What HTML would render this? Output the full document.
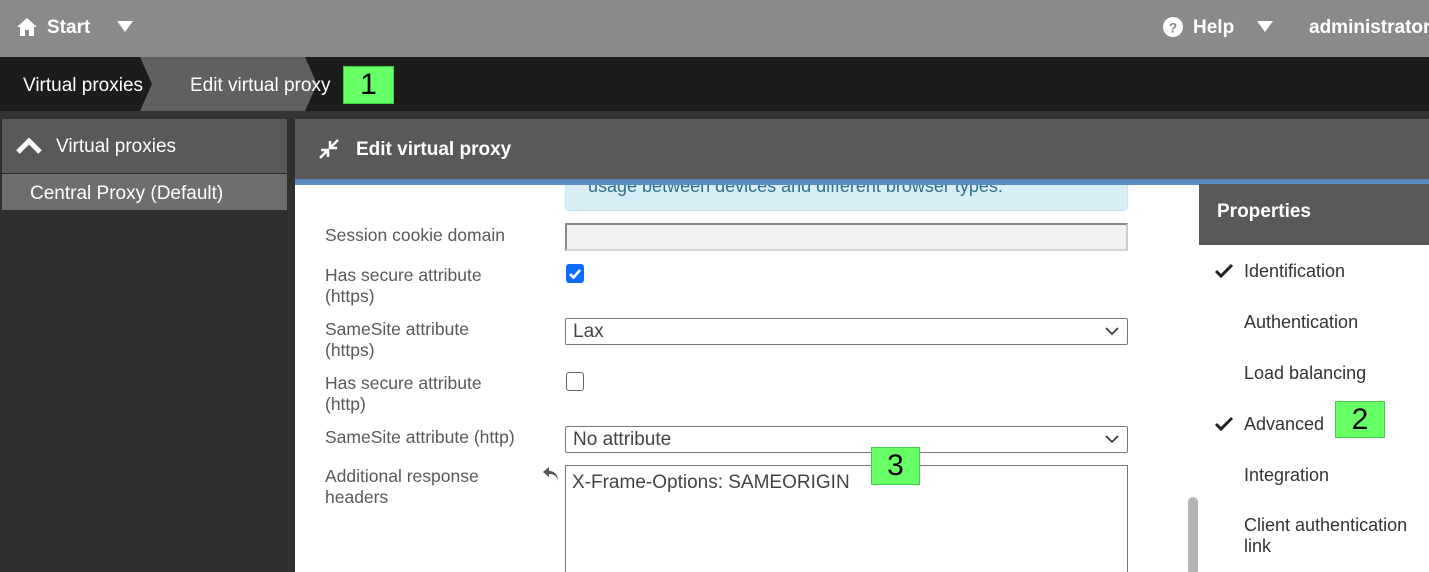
<!DOCTYPE html><html><head><style>
*{margin:0;padding:0;box-sizing:border-box}
html,body{width:1429px;height:572px;overflow:hidden}
body{background:#2f2f2f;font-family:"Liberation Sans",sans-serif;position:relative}
.a{position:absolute}
.lbl{position:absolute;left:325px;font-size:17.5px;color:#595959;line-height:21px}
.nav{position:absolute;left:1244px;font-size:18px;color:#333}
.g{position:absolute;background:#66ff66;border:1px solid #4c4;color:#000;font-size:30px;text-align:center}
.sel{position:absolute;left:565px;width:563px;height:27px;border:1px solid #777;background:#fff;font-size:19px;color:#444;padding:2px 7px;border-radius:2px}
.sel svg{position:absolute;right:8px;top:8px}
</style></head><body>
<div class="a" style="left:0;top:0;width:1429px;height:57px;background:#8a8a8a"></div>
<svg class="a" style="left:16px;top:17px" width="22" height="20" viewBox="0 0 22 20"><path d="M11 1L1 10h3v9h5v-6h4v6h5v-9h3z" fill="#fff"/></svg>
<div class="a" style="left:47px;top:17px;color:#fff;font-weight:bold;font-size:19px">Start</div>
<svg class="a" style="left:117px;top:21px" width="16" height="12"><path d="M0 0h16L8 11z" fill="#fff"/></svg>
<svg class="a" style="left:1163px;top:17px" width="20" height="20"><circle cx="10" cy="10" r="10" fill="#fff"/><text x="10" y="15.5" text-anchor="middle" font-family="Liberation Sans" font-weight="bold" font-size="14" fill="#8a8a8a">?</text></svg>
<div class="a" style="left:1193px;top:17px;color:#fff;font-weight:bold;font-size:19px">Help</div>
<svg class="a" style="left:1257px;top:21px" width="16" height="12"><path d="M0 0h16L8 11z" fill="#fff"/></svg>
<div class="a" style="left:1309px;top:17px;color:#fff;font-weight:bold;font-size:19px;white-space:nowrap">administrator</div>
<div class="a" style="left:0;top:57px;width:1429px;height:54px;background:#1c1c1c"></div>
<svg class="a" style="left:140px;top:57px" width="215" height="54"><path d="M0 0H165L177 27L165 54H0L12 27Z" fill="#606060"/></svg>
<div class="a" style="left:23px;top:75px;color:#fff;font-size:19px">Virtual proxies</div>
<div class="a" style="left:190px;top:75px;color:#fff;font-size:19px">Edit virtual proxy</div>
<div class="g" style="left:343px;top:66px;width:51px;height:38px;line-height:36px">1</div>
<div class="a" style="left:0;top:111px;width:1429px;height:8px;background:#333"></div>
<div class="a" style="left:2px;top:119px;width:285px;height:54px;background:#595959"></div>
<svg class="a" style="left:15px;top:137px" width="28" height="18"><path d="M3 15L14 4L25 15" stroke="#fff" stroke-width="5" fill="none"/></svg>
<div class="a" style="left:56px;top:136px;color:#fff;font-size:19px">Virtual proxies</div>
<div class="a" style="left:2px;top:174px;width:285px;height:36px;background:#6e6e6e"></div>
<div class="a" style="left:30px;top:183px;color:#fff;font-size:19px">Central Proxy (Default)</div>
<div class="a" style="left:295px;top:119px;width:1134px;height:61px;background:#595959"></div>
<svg class="a" style="left:317px;top:138px" width="24" height="22"><path d="M3 20L11 12M4 12h7v7M21 2L13 10M13 3v7h7" stroke="#fff" stroke-width="2.5" fill="none"/></svg>
<div class="a" style="left:356px;top:139px;color:#fff;font-weight:bold;font-size:19px">Edit virtual proxy</div>
<div class="a" style="left:295px;top:179px;width:1134px;height:6px;background:#5b8abd"></div>
<div class="a" style="left:295px;top:185px;width:1134px;height:387px;background:#fff;overflow:hidden">
<div class="a" style="left:270px;top:0;width:563px;height:26px;background:#d9edf7;border:1px solid #bce8f1;border-top:none;border-radius:0 0 4px 4px;overflow:hidden"><div style="position:absolute;left:22px;top:-9px;color:#31708f;font-size:18px">usage between devices and different browser types.</div></div>
<div class="a" style="left:270px;top:280px;width:563px;height:130px;border:1px solid #777;font-size:19px;color:#444;padding:6px 6px">X-Frame-Options: SAMEORIGIN</div>
</div>
<div class="lbl" style="top:225px">Session cookie domain</div>
<div class="a" style="left:565px;top:223px;width:563px;height:28px;background:#f1f1f1;border:2px solid #888;border-right-color:#ccc;border-bottom-color:#d5d5d5"></div>
<div class="lbl" style="top:265px">Has secure attribute<br>(https)</div>
<div class="a" style="left:566px;top:264px;width:18px;height:19px;background:#0d6efd;border-radius:3px"><svg width="18" height="19"><path d="M4 10l3.5 3.5L14 6" stroke="#fff" stroke-width="2.5" fill="none"/></svg></div>
<div class="lbl" style="top:319px">SameSite attribute<br>(https)</div>
<div class="sel" style="top:318px">Lax<svg width="14" height="9"><path d="M1 1l6 6 6-6" stroke="#333" stroke-width="1.6" fill="none"/></svg></div>
<div class="lbl" style="top:373px">Has secure attribute<br>(http)</div>
<div class="a" style="left:566px;top:372px;width:18px;height:19px;border:1px solid #666;border-radius:3px"></div>
<div class="lbl" style="top:427px">SameSite attribute (http)</div>
<div class="sel" style="top:426px">No attribute<svg width="14" height="9"><path d="M1 1l6 6 6-6" stroke="#333" stroke-width="1.6" fill="none"/></svg></div>
<div class="lbl" style="top:466px">Additional response<br>headers</div>
<svg class="a" style="left:541px;top:466px" width="20" height="16"><path d="M8 1L2 6l6 5V8c5 0 8 2 9 7 0-6-3-10-9-10z" fill="#555"/></svg>
<div class="g" style="left:871px;top:447px;width:49px;height:38px;line-height:36px">3</div>
<div class="a" style="left:1188px;top:497px;width:10px;height:75px;background:#b3b3b3;border-radius:5px 5px 0 0"></div>
<div class="a" style="left:1199px;top:184px;width:230px;height:61px;background:#595959"></div>
<div class="a" style="left:1217px;top:201px;color:#fff;font-weight:bold;font-size:19px">Properties</div>
<svg class="a" style="left:1214px;top:263px" width="20" height="16"><path d="M2 8l5 5L18 2" stroke="#222" stroke-width="3" fill="none"/></svg>
<div class="nav" style="top:261px">Identification</div>
<div class="nav" style="top:312px">Authentication</div>
<div class="nav" style="top:363px">Load balancing</div>
<svg class="a" style="left:1214px;top:416px" width="20" height="16"><path d="M2 8l5 5L18 2" stroke="#222" stroke-width="3" fill="none"/></svg>
<div class="nav" style="top:414px">Advanced</div>
<div class="g" style="left:1335px;top:401px;width:50px;height:37px;line-height:35px">2</div>
<div class="nav" style="top:465px">Integration</div>
<div class="nav" style="top:515px;line-height:21px">Client authentication<br>link</div>
</body></html>
